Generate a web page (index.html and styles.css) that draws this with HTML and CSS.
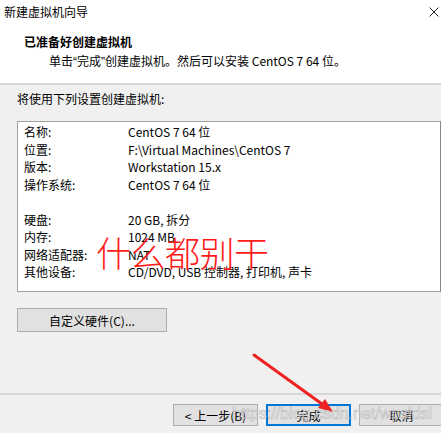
FILE: index.html
```html
<!DOCTYPE html>
<html lang="zh-CN">
<head>
<meta charset="utf-8">
<title>新建虚拟机向导</title>
<link rel="stylesheet" href="styles.css">
</head>
<body>
<div class="window">
  <div class="titlebar">
    <span class="title">新建虚拟机向导</span>
    <svg class="close" width="10" height="10" viewBox="0 0 10 10"><path d="M0.5 0.5L9.5 9.5M9.5 0.5L0.5 9.5" stroke="#222" stroke-width="1"/></svg>
  </div>
  <div class="header">
    <div class="h-title">已准备好创建虚拟机</div>
    <div class="h-sub">单击<span class="q">“</span>完成<span class="q">”</span>创建虚拟机。然后可以安装 CentOS 7 64 位。</div>
  </div>
  <div class="content">
    <div class="intro">将使用下列设置创建虚拟机:</div>
    <div class="listbox">
      <div class="row"><span class="k">名称:</span><span class="v">CentOS 7 64 位</span></div>
      <div class="row"><span class="k">位置:</span><span class="v">F:\Virtual Machines\CentOS 7</span></div>
      <div class="row"><span class="k">版本:</span><span class="v">Workstation 15.x</span></div>
      <div class="row"><span class="k">操作系统:</span><span class="v">CentOS 7 64 位</span></div>
      <div class="row blank"></div>
      <div class="row"><span class="k">硬盘:</span><span class="v">20 GB, 拆分</span></div>
      <div class="row"><span class="k">内存:</span><span class="v">1024 MB</span></div>
      <div class="row"><span class="k">网络适配器:</span><span class="v">NAT</span></div>
      <div class="row"><span class="k">其他设备:</span><span class="v">CD/DVD, USB 控制器, 打印机, 声卡</span></div>
    </div>
    <button class="btn btn-custom">自定义硬件(C)...</button>
  </div>
  <div class="footer">
    <button class="btn">&lt; 上一步(B)</button>
    <button class="btn btn-default">完成</button>
    <button class="btn">取消</button>
  </div>
</div>
<div class="annot">什么都别干</div>
<svg class="arrow" width="441" height="433" viewBox="0 0 441 433">
  <line x1="254" y1="355" x2="322" y2="404" stroke="#ee2222" stroke-width="3" stroke-linecap="round"/>
  <polygon points="333,412 318,408 325,399" fill="#ee2222"/>
</svg>
<div class="watermark">https://blog.csdn.net/wpsldsl</div>
</body>
</html>
```
FILE: styles.css
```css
html, body {
  margin: 0;
  padding: 0;
}
body {
  width: 441px;
  height: 433px;
  overflow: hidden;
  position: relative;
  background: #f0f0f0;
  font-family: "Noto Sans CJK SC", "Noto Sans", sans-serif;
  font-size: 12px;
  color: #000;
}
.window {
  width: 458px;
  display: flex;
  flex-direction: column;
}
.titlebar {
  width: 441px;
  height: 25px;
  background: #fff;
  display: flex;
  align-items: center;
  justify-content: space-between;
  box-sizing: border-box;
  padding: 0 2px 1px 4px;
}
.title {
  font-size: 12px;
  line-height: 16px;
}
.close {
  display: block;
}
.header {
  height: 60px;
  background: #fff;
  box-sizing: border-box;
  padding-top: 8px;
  border-bottom: 2px solid #d6d6d6;
}
.h-title {
  font-weight: bold;
  line-height: 18px;
  padding-left: 24px;
}
.h-sub {
  margin-top: 1px;
  line-height: 18px;
  padding-left: 49px;
}
.q {
  font-family: "Liberation Sans", Arial, sans-serif;
}
.content {
  padding: 5px 17px 0 17px;
  height: 310px;
  box-sizing: border-box;
  border-bottom: 2px solid #d6d6d6;
}
.intro {
  line-height: 18px;
}
.listbox {
  margin-top: 13px;
  height: 171px;
  box-sizing: border-box;
  background: #fff;
  border: 1px solid #a0a0a0;
  border-right-color: #828790;
  padding: 1px 0 0 6px;
}
.row {
  display: flex;
  height: 17.5px;
  line-height: 17.5px;
}
.k {
  width: 104px;
  flex: none;
}
.btn {
  font-family: inherit;
  font-size: 12px;
  color: #000;
  background: #e1e1e1;
  border: 1px solid #adadad;
  padding: 0;
  margin: 0;
  box-sizing: border-box;
}
.btn-custom {
  margin-top: 16px;
  width: 150px;
  height: 24px;
}
.footer {
  display: flex;
  gap: 8px;
  padding: 9px 0 0 173px;
}
.footer .btn {
  width: 85px;
  height: 22px;
}
.footer .btn-default {
  border: 2px solid #0078d7;
}
.annot {
  position: absolute;
  left: 96px;
  top: 228px;
  font-size: 35px;
  line-height: 48px;
  color: #ff1a1a;
  letter-spacing: -0.5px;
  font-weight: 300;
}
.arrow {
  position: absolute;
  left: 0;
  top: 0;
  pointer-events: none;
}
.watermark {
  position: absolute;
  left: 232px;
  top: 404px;
  font-family: "Liberation Sans", Arial, sans-serif;
  font-size: 16px;
  line-height: 20px;
  color: rgba(255, 255, 255, 0.55);
  -webkit-text-stroke: 0.7px rgba(150, 150, 150, 0.55);
  white-space: nowrap;
}
```
